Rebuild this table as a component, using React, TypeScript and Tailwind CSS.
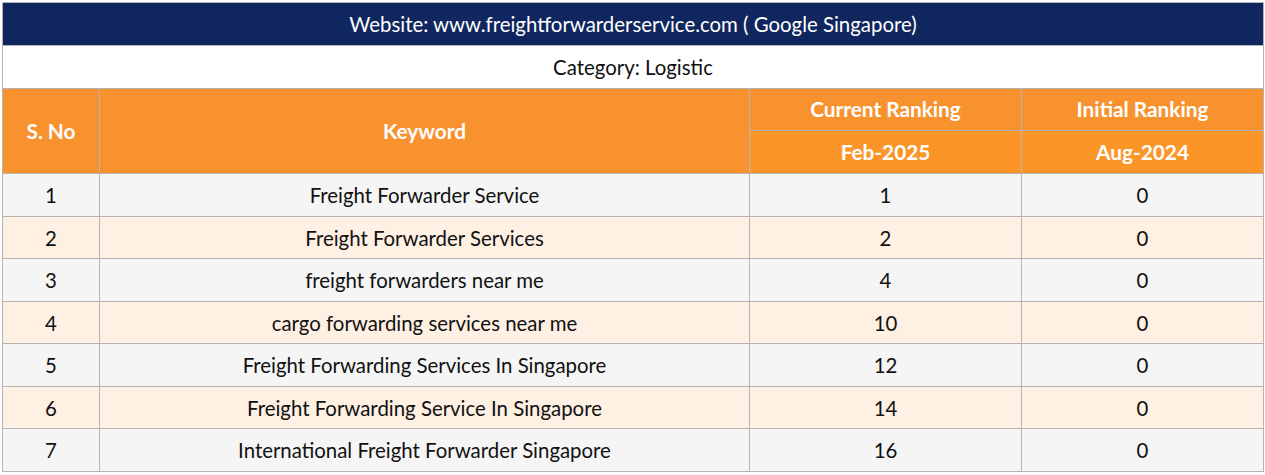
import React from 'react';

const rows = [
  { no: 1, keyword: 'Freight Forwarder Service', current: 1, initial: 0 },
  { no: 2, keyword: 'Freight Forwarder Services', current: 2, initial: 0 },
  { no: 3, keyword: 'freight forwarders near me', current: 4, initial: 0 },
  { no: 4, keyword: 'cargo forwarding services near me', current: 10, initial: 0 },
  { no: 5, keyword: 'Freight Forwarding Services In Singapore', current: 12, initial: 0 },
  { no: 6, keyword: 'Freight Forwarding Service In Singapore', current: 14, initial: 0 },
  { no: 7, keyword: 'International Freight Forwarder Singapore', current: 16, initial: 0 },
];

export default function App() {
  return (
    <div className="bg-white p-[2px] font-['Lato','Liberation_Sans',sans-serif]">
      <table className="w-[1261px] table-fixed border-collapse text-center text-[20.4px] leading-none text-[#111]">
        <colgroup>
          <col className="w-[97px]" />
          <col className="w-[650px]" />
          <col className="w-[272px]" />
          <col className="w-[242px]" />
        </colgroup>
        <thead>
          <tr className="h-[43px] bg-[#10265e] text-white">
            <th colSpan={4} className="border border-[#b4b4b4] font-normal">
              Website: www.freightforwarderservice.com ( Google Singapore)
            </th>
          </tr>
          <tr className="h-[43px] bg-white">
            <th colSpan={4} className="border border-[#b4b4b4] font-normal">
              Category: Logistic
            </th>
          </tr>
          <tr className="h-[42px] bg-[#f7922f] text-[20.8px] font-bold text-white">
            <th rowSpan={2} className="border border-[#b4b4b4]">S. No</th>
            <th rowSpan={2} className="border border-[#b4b4b4]">Keyword</th>
            <th className="border border-[#b4b4b4]">Current Ranking</th>
            <th className="border border-[#b4b4b4]">Initial Ranking</th>
          </tr>
          <tr className="h-[43px] bg-[#fc9527] text-[20.8px] font-bold text-white">
            <th className="border border-[#b4b4b4]">Feb-2025</th>
            <th className="border border-[#b4b4b4]">Aug-2024</th>
          </tr>
        </thead>
        <tbody>
          {rows.map((r, i) => (
            <tr key={r.no} className={`h-[42.5px] ${i % 2 === 0 ? 'bg-[#f5f5f5]' : 'bg-[#fef0e2]'}`}>
              <td className="border border-[#b4b4b4] pt-[1px]">{r.no}</td>
              <td className="border border-[#b4b4b4] pt-[1px]">{r.keyword}</td>
              <td className="border border-[#b4b4b4] pt-[1px]">{r.current}</td>
              <td className="border border-[#b4b4b4] pt-[1px]">{r.initial}</td>
            </tr>
          ))}
        </tbody>
      </table>
    </div>
  );
}
